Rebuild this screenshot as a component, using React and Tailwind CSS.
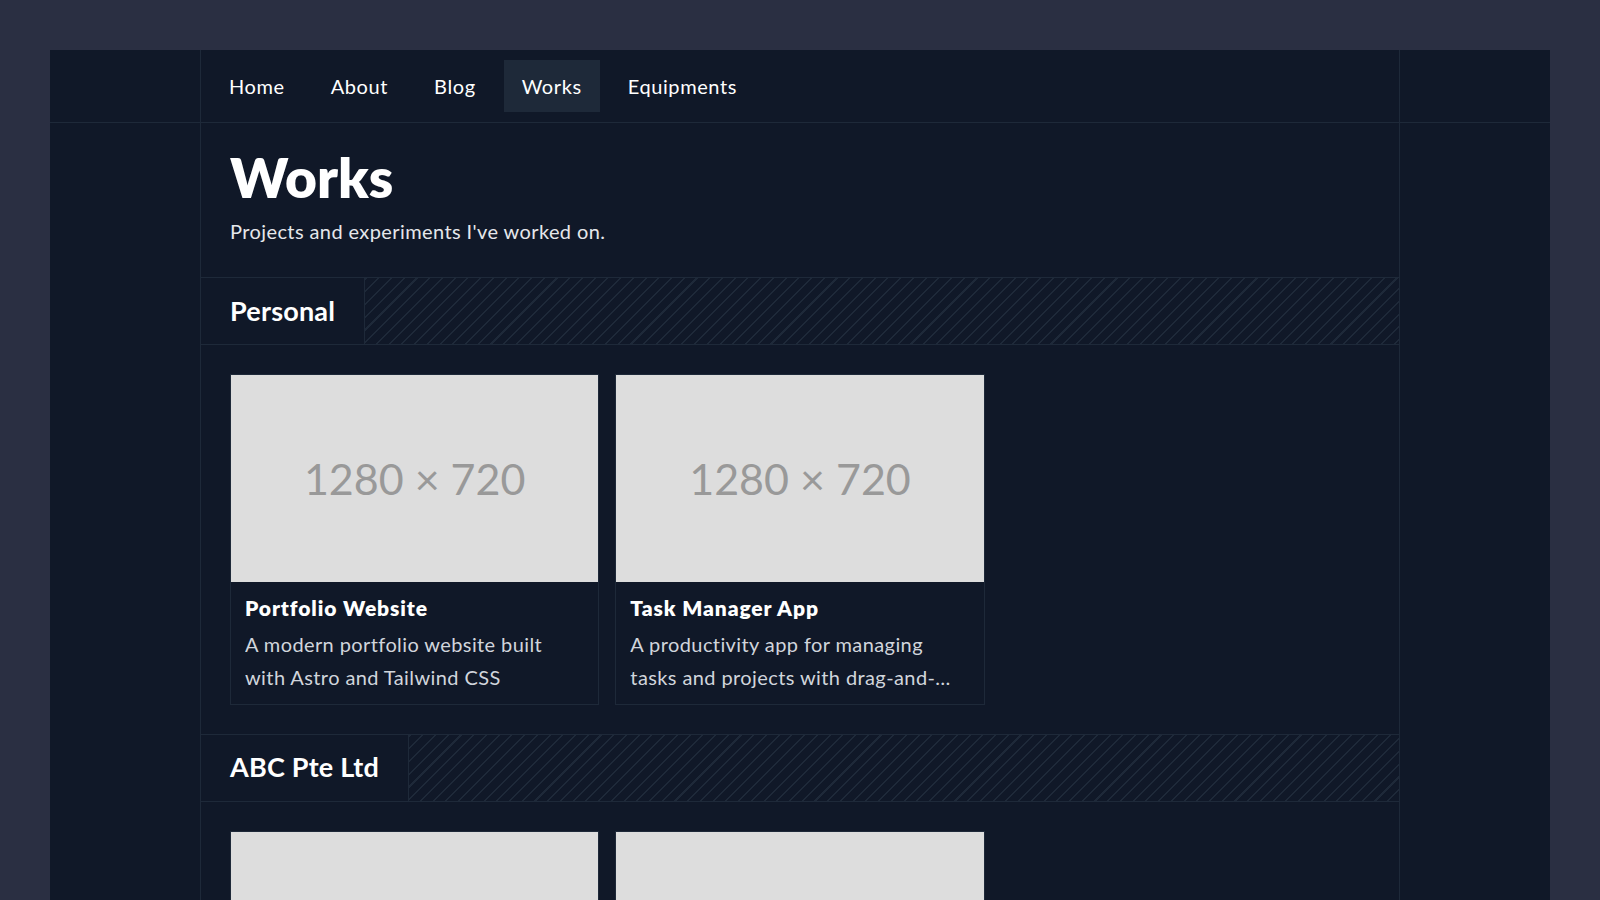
import React from 'react';

const navItems = ['Home', 'About', 'Blog', 'Works', 'Equipments'];

const sections = [
  {
    title: 'Personal',
    projects: [
      {
        name: 'Portfolio Website',
        desc: 'A modern portfolio website built with Astro and Tailwind CSS',
      },
      {
        name: 'Task Manager App',
        desc: 'A productivity app for managing tasks and projects with drag-and-drop functionality',
      },
    ],
  },
  {
    title: 'ABC Pte Ltd',
    projects: [
      {
        name: 'Internal Dashboard',
        desc: 'An analytics dashboard for tracking company metrics and reports',
      },
      {
        name: 'Customer Portal',
        desc: 'A self-service portal for customers to manage their accounts',
      },
    ],
  },
];

const ProjectCard = ({ project }) => (
  <div className="border border-[#1e2939] bg-[#101828]">
    <div className="aspect-video bg-[#dddddd] flex items-center justify-center">
      <span className="text-[43px] text-[#999999] leading-none">1280 × 720</span>
    </div>
    <div className="px-[14px] pt-[12px] pb-[10px]">
      <h3 className="text-[21px] font-extrabold tracking-[0.9px] text-white leading-7">{project.name}</h3>
      <p className="mt-[6px] text-xl tracking-[0.4px] leading-[33px] text-[#d1d5dc] line-clamp-2">{project.desc}</p>
    </div>
  </div>
);

const Section = ({ section }) => (
  <section>
    <div className="flex h-[68px] border-y border-[#1e2939]">
      <div className="flex items-center px-[29px] border-r border-[#1e2939]">
        <h2 className="text-[27px] font-bold tracking-[0.2px] text-white">{section.title}</h2>
      </div>
      <div className="flex-1 bg-[repeating-linear-gradient(135deg,#1e2939_0px,#1e2939_1.5px,transparent_1.5px,transparent_9px)]" />
    </div>
    <div className="grid grid-cols-3 gap-4 p-[29px]">
      {section.projects.map((p) => (
        <ProjectCard key={p.name} project={p} />
      ))}
    </div>
  </section>
);

export default function App() {
  return (
    <div
      className="min-h-screen bg-[#2a2f42] px-[50px] pt-[50px]"
      style={{ fontFamily: 'Lato, "Open Sans", sans-serif' }}
    >
      <div className="bg-[#101828] min-h-[850px] text-white">
        <header className="border-b border-[#1e2939]">
          <nav className="mx-auto w-[1200px] border-x border-[#1e2939] flex gap-[10px] p-[10px]">
            {navItems.map((item) => (
              <a
                key={item}
                href="#"
                className={`px-[18px] py-3 text-xl tracking-[0.6px] leading-7 text-white ${
                  item === 'Works' ? 'bg-[#1e2939]' : ''
                }`}
              >
                {item}
              </a>
            ))}
          </nav>
        </header>

        <main className="mx-auto w-[1200px] border-x border-[#1e2939]">
          <div className="px-[29px] pt-[27px] pb-[32px]">
            <h1 className="text-[55px] font-extrabold leading-none text-white">Works</h1>
            <p className="mt-3 text-xl tracking-[0.4px] leading-7 text-[#e5e7eb]">
              Projects and experiments I've worked on.
            </p>
          </div>
          {sections.map((s) => (
            <Section key={s.title} section={s} />
          ))}
        </main>
      </div>
    </div>
  );
}
